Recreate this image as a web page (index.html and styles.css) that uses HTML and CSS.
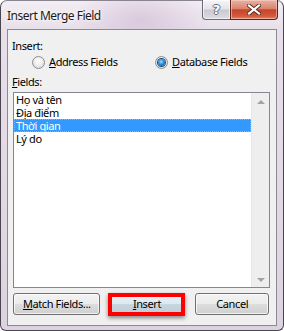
FILE: index.html
```html
<!DOCTYPE html>
<html>
<head>
<meta charset="utf-8">
<link rel="stylesheet" href="styles.css">
</head>
<body>
<div class="window">
  <div class="titlebar">
    <div class="title">Insert Merge Field</div>
    <div class="caption">
      <div class="cap-btn help"><span class="q">?</span></div>
      <div class="cap-btn close">
        <svg width="14" height="11" viewBox="0 0 14 11">
          <path d="M2 1.5 L12 9.5 M12 1.5 L2 9.5" stroke="#5a2a22" stroke-width="4" stroke-linecap="square"/>
          <path d="M2 1.5 L12 9.5 M12 1.5 L2 9.5" stroke="#ffffff" stroke-width="2.2" stroke-linecap="square"/>
        </svg>
      </div>
    </div>
  </div>
  <div class="client">
    <div class="label">Insert:</div>
    <div class="radios">
      <div class="radio"><span class="circle"></span><span><u>A</u>ddress Fields</span></div>
      <div class="radio checked"><span class="circle"><span class="dot"></span></span><span><u>D</u>atabase Fields</span></div>
    </div>
    <div class="label fields-label"><u>F</u>ields:</div>
    <div class="listbox">
      <ul class="items">
        <li class="item">Họ và tên</li>
        <li class="item">Địa điểm</li>
        <li class="item selected">Thời gian</li>
        <li class="item">Lý do</li>
      </ul>
      <div class="scrollbar">
        <span class="arrow up"></span>
        <span class="arrow down"></span>
      </div>
    </div>
    <div class="buttons">
      <div class="btn match"><u>M</u>atch Fields...</div>
      <div class="default-wrap">
        <div class="btn insert"><u>I</u>nsert</div>
        <span class="highlight"></span>
      </div>
      <div class="btn cancel">Cancel</div>
    </div>
  </div>
</div>
</body>
</html>
```

FILE: styles.css
```css
html, body {
  margin: 0;
  padding: 0;
  background: #ffffff;
}
body {
  width: 284px;
  height: 331px;
  overflow: hidden;
  font-family: "Noto Sans", "Open Sans", sans-serif;
  font-size: 11px;
  letter-spacing: -0.4px;
  color: #000;
}
.window {
  box-sizing: border-box;
  width: 284px;
  height: 331px;
  border: 1px solid #4a4650;
  border-top-color: #8a8490;
  border-radius: 7px 7px 6px 6px;
  background:
    radial-gradient(ellipse 70px 40px at 140px 20px, rgba(210,190,215,0.7), rgba(210,190,215,0) 100%),
    linear-gradient(180deg, #f3eef3 0px, #e7dfe9 30px, #ddd3e0 100%);
  display: flex;
  flex-direction: column;
}
.titlebar {
  height: 28px;
  display: flex;
  justify-content: space-between;
  align-items: flex-start;
}
.title {
  padding: 7px 0 0 6px;
  line-height: 15px;
  font-size: 12px;
  letter-spacing: -0.5px;
  color: #1a1a1a;
  text-shadow: 0 0 6px #ffffff, 0 0 3px #ffffff;
}
.caption {
  display: flex;
  margin-right: 5px;
  margin-top: -1px;
}
.cap-btn {
  box-sizing: border-box;
  height: 20px;
  display: flex;
  align-items: center;
  justify-content: center;
  border: 1px solid #6d6873;
  border-top: none;
}
.help {
  width: 28px;
  border-right: none;
  border-radius: 0 0 0 4px;
  background: linear-gradient(180deg, #f6f5f8 0%, #e4e2e8 48%, #cbc8d0 52%, #dedbe2 100%);
  box-shadow: inset 0 0 0 1px rgba(255,255,255,0.6);
}
.q {
  font-family: "DejaVu Sans", sans-serif;
  font-size: 13px;
  font-weight: bold;
  letter-spacing: 0;
  color: #ffffff;
  line-height: 13px;
  text-shadow: 1px 0 0 #6c6c74, -1px 0 0 #6c6c74, 0 1px 0 #6c6c74, 0 -1px 0 #6c6c74;
}
.close {
  width: 48px;
  border-color: #5b231a;
  border-radius: 0 0 4px 0;
  background: linear-gradient(180deg, #eab2a4 0%, #d98570 45%, #c6432a 52%, #d25a3c 85%, #e08a64 100%);
  box-shadow: inset 0 0 0 1px rgba(255,220,210,0.5);
}
.client {
  box-sizing: border-box;
  margin: 0 6px;
  height: 297px;
  border: 1px solid #8b8a90;
  background: #f0f0f0;
  padding: 8px 7px 10px 4px;
  display: flex;
  flex-direction: column;
}
.label {
  line-height: 15px;
  height: 15px;
}
.radios {
  margin-top: 1px;
  height: 16px;
  display: grid;
  grid-template-columns: 123px auto;
  padding-left: 20px;
  align-items: center;
}
.radio {
  display: flex;
  align-items: center;
  gap: 4px;
  line-height: 16px;
}
.circle {
  box-sizing: border-box;
  width: 13px;
  height: 13px;
  border-radius: 50%;
  border: 1px solid #8f8f8f;
  background: radial-gradient(circle at 50% 40%, #ffffff 0%, #f0f0f0 40%, #d2d2d2 100%);
  display: flex;
  align-items: center;
  justify-content: center;
}
.dot {
  width: 7px;
  height: 7px;
  border-radius: 50%;
  background: radial-gradient(circle at 45% 40%, #9fe0ff 0%, #2c8fd8 45%, #0b3e7a 100%);
  box-shadow: 0 0 0 1px #1c4a7a;
}
.fields-label {
  margin-top: 4px;
}
.listbox {
  box-sizing: border-box;
  margin: 3px 0 0 1px;
  width: 257px;
  height: 196px;
  border: 1px solid #828790;
  background: #ffffff;
  display: flex;
}
.items {
  list-style: none;
  margin: 0;
  padding: 0;
  flex: 1;
}
.item {
  height: 13px;
  line-height: 13px;
  padding-left: 2px;
  white-space: nowrap;
}
.item.selected {
  background: #3399ff;
  color: #ffffff;
  outline: 1px dotted #e8a050;
  outline-offset: -1px;
}
.scrollbar {
  width: 17px;
  background: #eeeeee;
  border-left: 1px solid #e8e8e8;
  display: flex;
  flex-direction: column;
  justify-content: space-between;
  align-items: center;
  padding: 7px 0 5px;
}
.arrow {
  width: 0;
  height: 0;
  border-left: 4px solid transparent;
  border-right: 4px solid transparent;
}
.arrow.up {
  border-bottom: 4px solid #a3a3a3;
}
.arrow.down {
  border-top: 4px solid #a3a3a3;
}
.buttons {
  margin: 5px 0 0 1px;
  height: 22px;
  display: flex;
  align-items: stretch;
}
.btn {
  box-sizing: border-box;
  height: 22px;
  border: 1px solid #707070;
  border-radius: 3px;
  background: linear-gradient(180deg, #f3f3f3 0%, #ebebeb 48%, #dddddd 52%, #cfcfcf 100%);
  box-shadow: inset 0 0 0 1px rgba(255,255,255,0.7);
  display: flex;
  align-items: center;
  justify-content: center;
  line-height: 14px;
}
.match {
  width: 88px;
}
.default-wrap {
  position: relative;
  margin-left: 9px;
  width: 75px;
}
.insert {
  width: 75px;
  border-color: #3c7fb1;
  background: linear-gradient(180deg, #eaf3f8 0%, #dde9f0 48%, #c8d6de 52%, #bcccd6 100%);
}
.highlight {
  position: absolute;
  left: -1px;
  top: 0;
  width: 77px;
  height: 23px;
  box-sizing: border-box;
  border: 4px solid #ff0000;
  box-shadow: 0 2px 4px rgba(0,0,0,0.45);
}
.cancel {
  margin-left: 11px;
  width: 74px;
}
u {
  text-decoration: underline;
  text-underline-offset: 1px;
}
```
